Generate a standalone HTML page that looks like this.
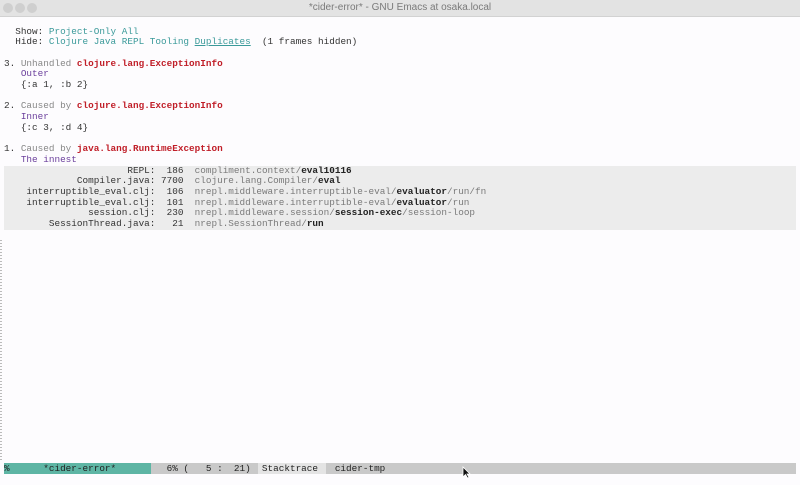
<!DOCTYPE html>
<html><head><meta charset="utf-8"><style>
body{margin:0;width:800px;height:485px;background:#fdfcfe;overflow:hidden;position:relative;font-family:"Liberation Mono",monospace;}
.tb{position:absolute;left:0;top:0;width:800px;height:16px;background:#e3e3e3;border-bottom:1px solid #d2d2d2;}
.dot{position:absolute;top:3px;width:10px;height:10px;border-radius:50%;background:#cfcfcf;}
.title{position:absolute;left:0;width:800px;top:2px;text-align:center;font-family:"Liberation Sans",sans-serif;font-size:10px;color:#7a7a7a;}
pre{position:absolute;left:4px;top:26.5px;margin:0;font-size:9.35px;line-height:10.7px;color:#333;font-family:"Liberation Mono",monospace;}
.t{color:#3b9a9a}.u{text-decoration:underline}
.g{color:#888}.r{color:#c01e28;font-weight:bold}.p{color:#6b3f9c}
.f{color:#7a7a7a}.b{color:#222;font-weight:bold}
.fb{position:absolute;left:4px;top:165.5px;width:792px;height:64px;background:#ececec;}
.ml{position:absolute;left:4px;top:463px;width:792px;height:11px;background:#c9c9c9;}
.ml1{position:absolute;left:0;top:0;width:147px;height:11px;background:#5eb5a4;}
.ml2{position:absolute;left:254px;top:0;width:68px;height:11px;background:#e4e4e4;}
.mlt{position:absolute;left:4px;top:463px;margin:0;font-size:9.35px;line-height:11px;color:#222;white-space:pre;}
.fr{position:absolute;left:0;top:240px;width:2px;height:220px;background:repeating-linear-gradient(#bbb 0 1px,transparent 1px 3px);}
</style></head><body>
<div class="tb"><div class="dot" style="left:3px"></div><div class="dot" style="left:15px"></div><div class="dot" style="left:27px"></div><div class="title">*cider-error* - GNU Emacs at osaka.local</div></div>
<div class="fb"></div>
<div class="fr"></div>
<pre>  Show: <span class="t">Project-Only All</span>
  Hide: <span class="t">Clojure Java REPL Tooling <span class="u">Duplicates</span></span>  (1 frames hidden)

3. <span class="g">Unhandled</span> <span class="r">clojure.lang.ExceptionInfo</span>
   <span class="p">Outer</span>
   {:a 1, :b 2}

2. <span class="g">Caused by</span> <span class="r">clojure.lang.ExceptionInfo</span>
   <span class="p">Inner</span>
   {:c 3, :d 4}

1. <span class="g">Caused by</span> <span class="r">java.lang.RuntimeException</span>
   <span class="p">The innest</span>
                      REPL:  186  <span class="f">compliment.context/</span><span class="b">eval10116</span>
             Compiler.java: 7700  <span class="f">clojure.lang.Compiler/</span><span class="b">eval</span>
    interruptible_eval.clj:  106  <span class="f">nrepl.middleware.interruptible-eval/</span><span class="b">evaluator</span><span class="f">/run/fn</span>
    interruptible_eval.clj:  101  <span class="f">nrepl.middleware.interruptible-eval/</span><span class="b">evaluator</span><span class="f">/run</span>
               session.clj:  230  <span class="f">nrepl.middleware.session/</span><span class="b">session-exec</span><span class="f">/session-loop</span>
        SessionThread.java:   21  <span class="f">nrepl.SessionThread/</span><span class="b">run</span>
</pre>
<div class="ml"><div class="ml1"></div><div class="ml2"></div></div>
<pre class="mlt">%      *cider-error*         6% (   5 :  21)  Stacktrace   cider-tmp</pre>
<svg style="position:absolute;left:462px;top:466px" width="9" height="13" viewBox="0 0 9 13"><path d="M1 1 L1 11 L3.5 8.5 L5.5 12 L7 11.3 L5 8 L8 8 Z" fill="#111" stroke="#fff" stroke-width="0.8"/></svg>
</body></html>
